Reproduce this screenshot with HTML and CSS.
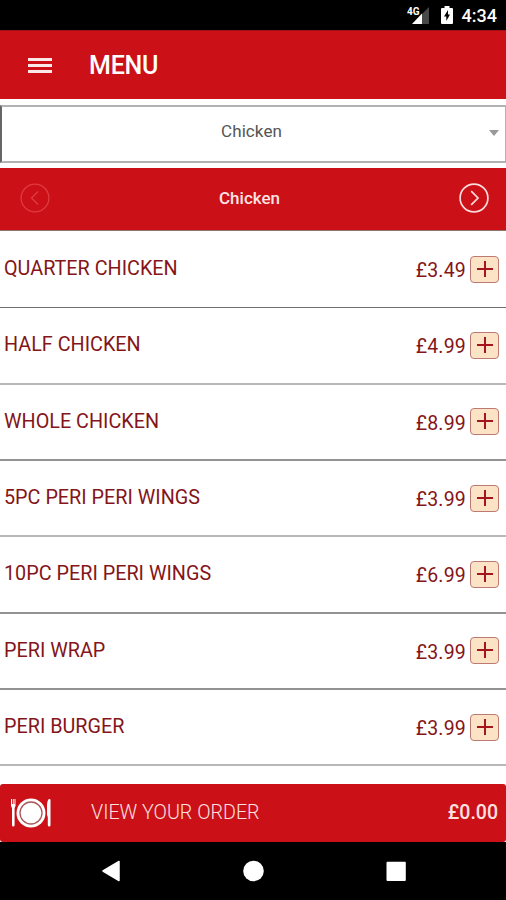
FILE: index.html
```
<!DOCTYPE html>
<html lang="en">
<head>
    <meta charset="UTF-8">
    <title>Menu</title>
    <link rel="stylesheet" href="styles.css">
</head>
<body>
<div class="status">
    <svg class="signal" width="24" height="20" viewBox="0 0 24 20">
        <path d="M21 2v17h-7V9z" fill="#484848"/>
        <path d="M14 8.500v10.500H4z" fill="#fff"/>
        <text x="-1" y="10" class="network">4G</text>
    </svg>
    <svg class="battery" width="12" height="18" viewBox="0 0 12 18">
        <path d="M3.500 0h5v2H11q1 0 1 1v14q0 1-1 1H1q-1 0-1-1V3q0-1 1-1h2.500z" fill="#fff"/>
        <path d="M7 4L3 10.500h2.300V15L9 8.500H7z" fill="#000"/>
    </svg>
    <span class="time">4:34</span>
</div>

<div class="header">
    <div class="burger"><i></i><i></i><i></i></div>
    <h1>MENU</h1>
</div>

<div class="select">
    <span class="select-text">Chicken</span>
    <span class="caret"></span>
</div>

<div class="category">
    <svg class="prev" width="30" height="30" viewBox="0 0 30 30">
        <circle cx="15" cy="15" r="13.900"/>
        <path d="M18 8.500L11.500 15l6.500 6.500"/>
    </svg>
    <span class="category-text">Chicken</span>
    <svg class="next" width="30" height="30" viewBox="0 0 30 30">
        <circle cx="15" cy="15" r="13.900"/>
        <path d="M12.200 8.200L19 15l-6.800 6.800"/>
    </svg>
</div>

<ul class="list">
    <li class="dark"><span class="name">QUARTER CHICKEN</span><span class="price">£3.49</span><span class="add"></span></li>
    <li><span class="name">HALF CHICKEN</span><span class="price">£4.99</span><span class="add"></span></li>
    <li class="mid"><span class="name">WHOLE CHICKEN</span><span class="price">£8.99</span><span class="add"></span></li>
    <li><span class="name">5PC PERI PERI WINGS</span><span class="price">£3.99</span><span class="add"></span></li>
    <li class="mid"><span class="name">10PC PERI PERI WINGS</span><span class="price">£6.99</span><span class="add"></span></li>
    <li class="mid"><span class="name">PERI WRAP</span><span class="price">£3.99</span><span class="add"></span></li>
    <li><span class="name">PERI BURGER</span><span class="price">£3.99</span><span class="add"></span></li>
</ul>

<div class="order">
    <svg class="plate" width="40" height="32" viewBox="0 0 40 32">
        <circle cx="20" cy="16" r="14.500" fill="#fff"/>
        <circle cx="20" cy="16" r="11" fill="none" stroke="#a8585a" stroke-width="1.300"/>
        <path d="M0 2h1v5h.8V2h.9v5h.8V2h1v7L3.600 11v17q0 1.500-1.300 1.500T1 28V11L0 9z" fill="#fff"/>
        <path d="M39.500 3v25q0 1.500-1.300 1.500T36.800 28V20L36 18V8q.3-5 2-6 1.500-.5 1.500 1z" fill="#fff"/>
    </svg>
    <span class="order-text">VIEW YOUR ORDER</span>
    <span class="total">£0.00</span>
</div>

<div class="nav">
    <svg width="506" height="58" viewBox="0 0 506 58">
        <path d="M119 19.500v19L103 29z" fill="#fff" stroke="#fff" stroke-width="1.500" stroke-linejoin="round"/>
        <circle cx="253.500" cy="29" r="10.300" fill="#fff"/>
        <rect x="386.500" y="19.700" width="19.300" height="19.300" rx="1" fill="#fff"/>
    </svg>
</div>
</body>
</html>
```

FILE: styles.css
```
* {
    margin: 0;
    padding: 0;
    box-sizing: border-box;
}

body {
    width: 506px;
    height: 900px;
    overflow: hidden;
    display: flex;
    flex-direction: column;
    background-color: #fff;
    font-family: Roboto, "Liberation Sans", sans-serif;
}

.status {
    height: 30px;
    display: flex;
    align-items: center;
    justify-content: flex-end;
    padding-right: 9px;
    background-color: #000;
    color: #fff;
}

.signal {
    margin-right: 9px;
    overflow: visible;
}

.network {
    font-size: 10px;
    font-weight: 700;
    fill: #fff;
    stroke: #000;
    stroke-width: 1px;
    paint-order: stroke;
}

.battery {
    margin-right: 9px;
}

.time {
    font-size: 18px;
    font-weight: 500;
    line-height: 30px;
    padding-top: 2px;
}

.header {
    height: 69px;
    display: flex;
    align-items: center;
    padding-left: 28px;
    background-color: #cb1017;
    border-top: 1px solid #a01015;
}

.burger {
    width: 24px;
    display: grid;
    gap: 3px;
    margin-right: 37px;
}

.burger i {
    height: 3px;
    background-color: #fbe9e9;
}

h1 {
    font-size: 25px;
    font-weight: 500;
    letter-spacing: -0.2px;
    color: #fff;
}

.select {
    height: 58px;
    margin: 6px 0 5px;
    display: flex;
    align-items: center;
    padding: 0 6px 6px 219px;
    justify-content: space-between;
    border: 2px solid #b1b3b1;
    border-left-color: #666;
    border-right-width: 1px;
}

.select-text {
    font-size: 17px;
    letter-spacing: 0.1px;
    color: #555;
}

.caret {
    border: 5.500px solid transparent;
    border-top: 6px solid #999;
    border-bottom: 0;
    margin-top: 3px;
}

.category {
    height: 63px;
    display: flex;
    align-items: center;
    padding: 0 17px 3px 20px;
    background-color: #cb1017;
    border-bottom: 1px solid #8f7272;
}

.category svg {
    fill: none;
    stroke: #fbdcdc;
    stroke-width: 1.700;
}

.category .prev {
    stroke: #df3b42;
    stroke-width: 1.300;
}

.category-text {
    flex: 1;
    padding-left: 169px;
    font-size: 17px;
    font-weight: 500;
    color: #fbe4e4;
}

.list {
    height: 553px;
    padding-top: 1px;
    list-style: none;
}

.list li {
    height: 76.330px;
    display: flex;
    align-items: center;
    padding: 0 7px 1px 4px;
    border-bottom: 2px solid #b8b8b8;
}

.list .dark {
    padding-bottom: 2px;
    border-bottom: 1px solid #6e6e6e;
}

.list .mid {
    border-bottom-color: #929292;
}

.name {
    flex: 1;
    font-size: 19.800px;
    color: #841519;
}

.price {
    font-size: 19.500px;
    letter-spacing: 0.2px;
    color: #841519;
    padding-top: 4px;
    margin-right: 4px;
}

.add {
    width: 29px;
    height: 27px;
    margin-top: 1px;
    display: grid;
    place-items: center;
    padding-bottom: 1px;
    background-color: #fde3c6;
    border: 1px solid #bd7a72;
    border-radius: 4px;
}

.add::before, .add::after {
    content: "";
    grid-area: 1 / 1;
    width: 16px;
    height: 2px;
    background-color: #a3161c;
}

.add::after {
    width: 2px;
    height: 16px;
}

.order {
    height: 58px;
    display: flex;
    align-items: center;
    padding: 0 8px 0 11px;
    background-color: #cb1017;
    border-radius: 3px;
    color: #fbe0e0;
}

.plate {
    margin-right: 40px;
}

.order-text {
    flex: 1;
    font-size: 19.700px;
    font-weight: 300;
    padding-bottom: 2px;
}

.total {
    font-size: 19.500px;
    font-weight: 500;
    padding-bottom: 2px;
}

.nav {
    height: 58px;
    background-color: #000;
}
```
